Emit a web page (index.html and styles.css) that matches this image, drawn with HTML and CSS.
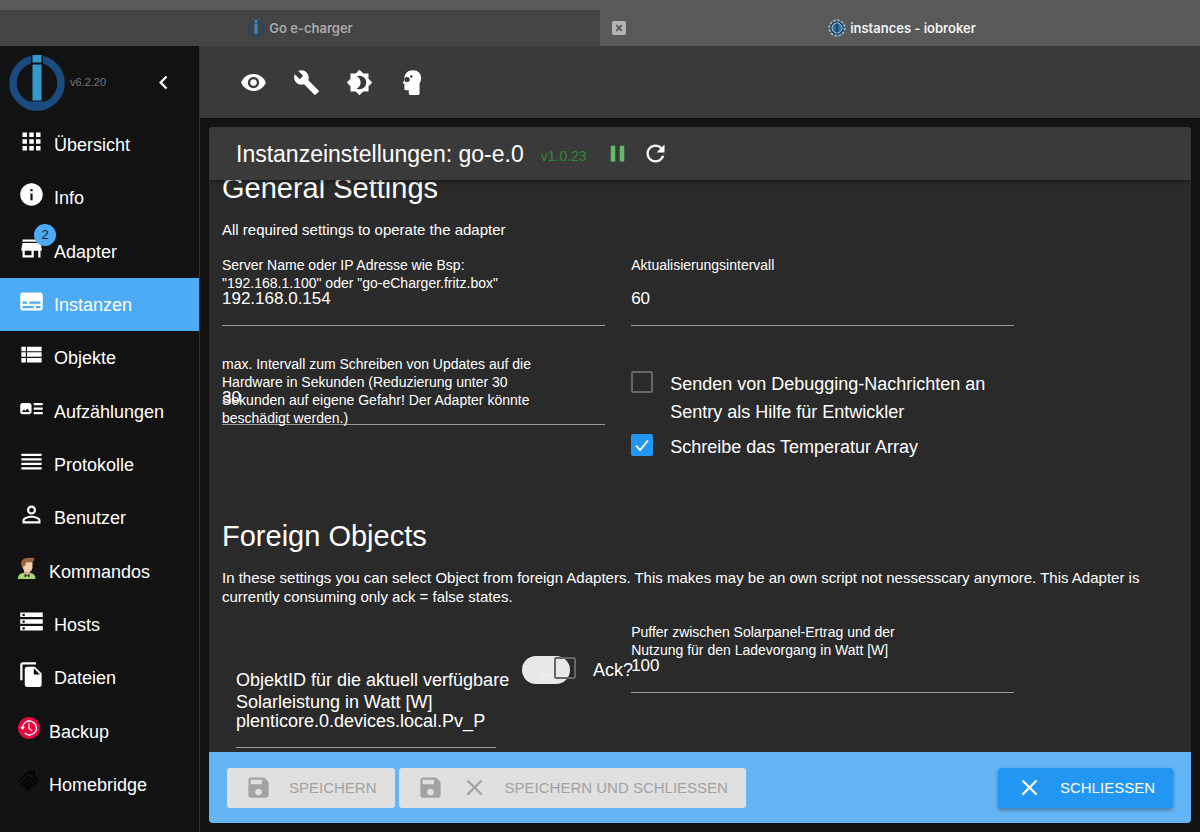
FILE: index.html
```html
<!DOCTYPE html>
<html lang="de">
<head>
<meta charset="utf-8">
<title>instances - iobroker</title>
<link rel="stylesheet" href="styles.css">
</head>
<body>
<div class="tabs">
  <a class="tab" href="#charger">
    <svg class="tab-icon" viewBox="0 0 18 18"><circle cx="9" cy="9.500" r="7.300" fill="none" stroke="#1f4568" stroke-width="2"/><path d="M7.600 1h2.800v2.600H7.600zM7.600 4.500h2.800V15H7.600z" fill="#3d8fb8"/></svg>
    <span>Go e-charger</span>
  </a>
  <div class="tab tab-active">
    <button class="tab-close" aria-label="Tab schließen"><svg viewBox="0 0 14 14"><path d="M4.200 4.200l5.600 5.600M9.800 4.200L4.200 9.800" stroke="#555" stroke-width="1.700"/></svg></button>
    <a class="tab-link" href="#instances">
      <svg class="tab-icon" viewBox="0 0 18 18"><circle cx="9" cy="9" r="7.800" fill="none" stroke="#8fc0e6" stroke-width="1.700" stroke-dasharray="2.400 1.684"/><circle cx="9" cy="9" r="6.600" fill="#1c3d5c"/><circle cx="9" cy="9" r="5" fill="#2f6c9c" stroke="#a3cdea" stroke-width="1"/><path d="M8.200 4.500h1.600v9H8.200z" fill="#173853"/></svg>
      <span>instances - iobroker</span>
    </a>
  </div>
</div>
<div class="app">
  <aside class="sidebar">
    <div class="brand">
      <svg class="logo" viewBox="0 0 56 58"><circle cx="28" cy="30" r="24" fill="none" stroke="#1b4a80" stroke-width="7.500"/><path d="M22 1h12v54H22z" fill="#121212"/><path d="M18 48.500h20v7.500c-6 2.400-14 2.400-20 0z" fill="#1b4a80"/><path d="M23.500 2h9v7.500h-9zM23.500 11.500h9V47.500h-9z" fill="#3399cc"/></svg>
      <span class="version">v6.2.20</span>
      <button class="icon-button collapse" aria-label="Menü einklappen"><svg class="icon" viewBox="0 0 24 24"><path d="M15.410 7.410 14 6l-6 6 6 6 1.410-1.410L10.830 12z"/></svg></button>
    </div>
    <nav class="menu">
      <a class="item" href="#"><span class="glyph"><svg class="icon" viewBox="0 0 24 24"><path d="M4 8h4V4H4v4zm6 12h4v-4h-4v4zm-6 0h4v-4H4v4zm0-6h4v-4H4v4zm6 0h4v-4h-4v4zm6-10v4h4V4h-4zm-6 4h4V4h-4v4zm6 6h4v-4h-4v4zm0 6h4v-4h-4v4z"/></svg></span><span>Übersicht</span></a>
      <a class="item" href="#"><span class="glyph"><svg class="icon" viewBox="0 0 24 24"><path d="M12 2C6.480 2 2 6.480 2 12s4.480 10 10 10 10-4.480 10-10S17.520 2 12 2zm1 15h-2v-6h2v6zm0-8h-2V7h2v2z"/></svg></span><span>Info</span></a>
      <a class="item" href="#"><span class="glyph"><svg class="icon" viewBox="0 0 24 24"><path d="M20 4H4v2h16V4zm1 10v-2l-1-5H4l-1 5v2h1v6h10v-6h4v6h2v-6h1zm-9 4H6v-4h6v4z"/></svg><span class="badge">2</span></span><span>Adapter</span></a>
      <a class="item item-active" href="#"><span class="glyph"><svg class="icon" viewBox="0 0 24 24"><path d="M20 4H4c-1.100 0-2 .9-2 2v12c0 1.100.9 2 2 2h16c1.100 0 2-.9 2-2V6c0-1.100-.9-2-2-2zM4 12h4v2H4v-2zm10 6H4v-2h10v2zm6 0h-4v-2h4v2zm0-4H10v-2h10v2z"/></svg></span><span>Instanzen</span></a>
      <a class="item" href="#"><span class="glyph"><svg class="icon" viewBox="0 0 24 24"><path d="M3 14h4v-4H3v4zm0 5h4v-4H3v4zM3 9h4V5H3v4zm5 5h13v-4H8v4zm0 5h13v-4H8v4zM8 5v4h13V5H8z"/></svg></span><span>Objekte</span></a>
      <a class="item" href="#"><span class="glyph"><svg class="icon" viewBox="0 0 24 24"><path d="M22 13h-8v-2h8v2zm0-6h-8v2h8V7zm-8 10h8v-2h-8v2zm-2-8v6c0 1.100-.9 2-2 2H4c-1.100 0-2-.9-2-2V9c0-1.100.9-2 2-2h6c1.100 0 2 .9 2 2zm-1.500 6l-2.250-3-1.750 2.260-1.250-1.510L3.500 15h7z"/></svg></span><span>Aufzählungen</span></a>
      <a class="item" href="#"><span class="glyph"><svg class="icon" viewBox="0 0 24 24"><path d="M3 15h18v-2H3v2zm0 4h18v-2H3v2zm0-8h18V9H3v2zm0-6v2h18V5H3z"/></svg></span><span>Protokolle</span></a>
      <a class="item" href="#"><span class="glyph"><svg class="icon" viewBox="0 0 24 24"><path d="M12 5.900c1.160 0 2.100.94 2.100 2.100s-.94 2.100-2.100 2.100S9.900 9.160 9.900 8s.94-2.100 2.100-2.100m0 9c2.970 0 6.100 1.460 6.100 2.100v1.100H5.900V17c0-.64 3.130-2.100 6.100-2.100M12 4C9.790 4 8 5.790 8 8s1.790 4 4 4 4-1.790 4-4-1.790-4-4-4zm0 9c-2.670 0-8 1.340-8 4v3h16v-3c0-2.660-5.330-4-8-4z"/></svg></span><span>Benutzer</span></a>
      <a class="item" href="#"><span class="glyph"><svg class="picture" viewBox="0 0 22 22"><path d="M0 22c0-4 2-5.500 5-6l4-1 4 1c3 .5 4.500 2.500 4.500 6z" fill="#a5d86e"/><path d="M6 12h6v4.500l-3 2.500-3-2.500z" fill="#dfa98c"/><path d="M4.500 5h10v5c0 3-2 5-5 5s-5-3-5-6z" fill="#f5cdb5"/><path d="M5 11.500C2.500 8.500 2.500 4 5 2.500 8 .5 13 1 16 .8c.5 2.200-.5 4.200-3 4.400H8L7 9H5.500z" fill="#9c6540"/><path d="M6.500 16.500L9 18.500l2.500-2v4L9 19l-2.500 1.500z" fill="#30343a"/></svg></span><span>Kommandos</span></a>
      <a class="item" href="#"><span class="glyph"><svg class="icon" viewBox="0 0 24 24"><path d="M2 20h20v-4H2v4zm2-3h2v2H4v-2zM2 4v4h20V4H2zm4 3H4V5h2v2zm-4 7h20v-4H2v4zm2-3h2v2H4v-2z"/></svg></span><span>Hosts</span></a>
      <a class="item" href="#"><span class="glyph"><svg class="icon" viewBox="0 0 24 24"><path d="M16 1H4c-1.100 0-2 .9-2 2v14h2V3h12V1zm-1 4l6 6v10c0 1.100-.9 2-2 2H7.990C6.890 23 6 22.100 6 21l.01-14c0-1.100.89-2 1.990-2h7zm-1 7h5.500L14 6.500V12z"/></svg></span><span>Dateien</span></a>
      <a class="item" href="#"><span class="glyph"><svg class="picture" viewBox="0 0 22 22"><circle cx="11" cy="11" r="11" fill="#e4073f"/><path d="M4.500 10.500a7 7 0 1 1 2.200 5.600" fill="none" stroke="#fff" stroke-width="1.400"/><path d="M2.200 9.800h4.700l-2.400 3.200z" fill="#fff"/><path d="M11 6.300V11.500l3.200 2.300" fill="none" stroke="#fff" stroke-width="1.100"/></svg></span><span>Backup</span></a>
      <a class="item" href="#"><span class="glyph"><svg class="picture" viewBox="0 0 22 22"><path d="M1 11L11 1.500l2.500 2.300V2H16v4.500l4 4M3 14.500l8-7.500 7.500 7M6.500 15.500L11 11.500l3.500 3.500-5.500 5.500M7.500 18l3-2.500" fill="none" stroke="#030303" stroke-width="2" stroke-linejoin="round" stroke-linecap="round"/></svg></span><span>Homebridge</span></a>
    </nav>
  </aside>
  <main class="main">
    <div class="toolbar">
      <button class="icon-button tool" aria-label="Ansicht"><svg class="icon" viewBox="0 0 24 24"><path d="M12 4.500C7 4.500 2.730 7.610 1 12c1.730 4.390 6 7.500 11 7.500s9.270-3.110 11-7.500c-1.730-4.390-6-7.500-11-7.500zM12 17c-2.760 0-5-2.240-5-5s2.240-5 5-5 5 2.240 5 5-2.240 5-5 5zm0-8c-1.660 0-3 1.340-3 3s1.340 3 3 3 3-1.340 3-3-1.340-3-3-3z"/></svg></button>
      <button class="icon-button tool" aria-label="Systemeinstellungen"><svg class="icon" viewBox="0 0 24 24"><path d="M22.700 19l-9.100-9.100c.9-2.300.4-5-1.500-6.900-2-2-5-2.400-7.400-1.300L9 6 6 9 1.600 4.700C.4 7.100.9 10.100 2.900 12.100c1.900 1.900 4.600 2.400 6.900 1.500l9.100 9.100c.4.4 1 .4 1.400 0l2.300-2.300c.5-.4.5-1.100.1-1.400z"/></svg></button>
      <button class="icon-button tool" aria-label="Farbschema"><svg class="icon" viewBox="0 0 24 24"><path d="M20 8.690V4h-4.690L12 .69 8.690 4H4v4.690L.69 12 4 15.310V20h4.690L12 23.310 15.310 20H20v-4.690L23.310 12 20 8.690zM12 18c-.89 0-1.740-.2-2.500-.55C11.560 16.500 13 14.420 13 12s-1.440-4.500-3.500-5.450C10.260 6.200 11.110 6 12 6c3.310 0 6 2.690 6 6s-2.690 6-6 6z"/></svg></button>
      <button class="icon-button tool" aria-label="Expertenmodus"><svg class="icon" viewBox="0 0 24 24"><path d="M12.500 1C7.900 1 4.800 4 4.800 8.300v1.400L3.300 12.600l1.500.4v4.500c0 .9.500 1.400 1.400 1.400h2.500V21.600c0 1 .5 1.500 1.400 1.500h6.800c.9 0 1.400-.5 1.400-1.500v-9c1-1.500 1.400-2.800 1.400-4.700C19.700 3.900 16.700 1 12.500 1z"/><circle cx="7.200" cy="9.300" r="2.300" fill="#3a3a3a"/><circle cx="10.900" cy="6.600" r="1.100" fill="#3a3a3a"/></svg></button>
    </div>
    <section class="panel">
      <header class="panel-head">
        <h1>Instanzeinstellungen: go-e.0</h1>
        <span class="adapter-version">v1.0.23</span>
        <button class="icon-button pause" aria-label="Anhalten"><svg class="icon" viewBox="0 0 24 24"><path d="M6 19h4V5H6v14zm8-14v14h4V5h-4z"/></svg></button>
        <button class="icon-button" aria-label="Neu starten"><svg class="icon" viewBox="0 0 24 24"><path d="M17.650 6.350C16.200 4.900 14.210 4 12 4c-4.420 0-7.990 3.580-7.990 8s3.570 8 7.990 8c3.730 0 6.840-2.550 7.730-6h-2.080c-.82 2.330-3.040 4-5.650 4-3.310 0-6-2.690-6-6s2.690-6 6-6c1.660 0 3.140.69 4.220 1.780L13 11h7V4l-2.350 2.350z"/></svg></button>
      </header>
      <div class="scroll">
        <div class="content">
          <h2>General Settings</h2>
          <p>All required settings to operate the adapter</p>
          <div class="form">
            <div class="field"><label for="host">Server Name oder IP Adresse wie Bsp: "192.168.1.100" oder "go-eCharger.fritz.box"</label><input id="host" type="text" value="192.168.0.154"></div>
            <div class="field"><label for="interval">Aktualisierungsintervall</label><input id="interval" type="text" value="60"></div>
            <div class="field"><label for="hardware">max. Intervall zum Schreiben von Updates auf die Hardware in Sekunden (Reduzierung unter 30 Sekunden auf eigene Gefahr! Der Adapter könnte beschädigt werden.)</label><input id="hardware" type="text" value="30"></div>
            <div class="checks">
              <label class="check"><input type="checkbox"><span>Senden von Debugging-Nachrichten an Sentry als Hilfe für Entwickler</span></label>
              <label class="check"><input type="checkbox" checked><span>Schreibe das Temperatur Array</span></label>
            </div>
          </div>
          <h2>Foreign Objects</h2>
          <p>In these settings you can select Object from foreign Adapters. This makes may be an own script not nessesscary anymore. This Adapter is currently consuming only ack = false states.</p>
          <div class="form">
            <div class="object">
              <div class="object-field"><label for="solar">ObjektID für die aktuell verfügbare Solarleistung in Watt [W]</label><input id="solar" type="text" value="plenticore.0.devices.local.Pv_P"></div>
              <button class="browse">...</button>
              <label class="check ack"><input type="checkbox"><span>Ack?</span></label>
            </div>
            <div class="field"><label for="buffer">Puffer zwischen Solarpanel-Ertrag und der Nutzung für den Ladevorgang in Watt [W]</label><input id="buffer" type="text" value="100"></div>
          </div>
        </div>
      </div>
      <footer class="actions">
        <button class="action" disabled><svg class="icon" viewBox="0 0 24 24"><path d="M17 3H5c-1.110 0-2 .9-2 2v14c0 1.100.89 2 2 2h14c1.100 0 2-.9 2-2V7l-4-4zm-5 16c-1.660 0-3-1.340-3-3s1.340-3 3-3 3 1.340 3 3-1.340 3-3 3zm3-10H5V5h10v4z"/></svg><span>SPEICHERN</span></button>
        <button class="action" disabled><svg class="icon" viewBox="0 0 24 24"><path d="M17 3H5c-1.110 0-2 .9-2 2v14c0 1.100.89 2 2 2h14c1.100 0 2-.9 2-2V7l-4-4zm-5 16c-1.660 0-3-1.340-3-3s1.340-3 3-3 3 1.340 3 3-1.340 3-3 3zm3-10H5V5h10v4z"/></svg><svg class="icon" viewBox="0 0 24 24"><path d="M19 6.410L17.590 5 12 10.590 6.410 5 5 6.410 10.590 12 5 17.590 6.410 19 12 13.410 17.590 19 19 17.590 13.410 12z"/></svg><span>SPEICHERN UND SCHLIESSEN</span></button>
        <button class="action action-primary"><svg class="icon" viewBox="0 0 24 24"><path d="M19 6.410L17.590 5 12 10.590 6.410 5 5 6.410 10.590 12 5 17.590 6.410 19 12 13.410 17.590 19 19 17.590 13.410 12z"/></svg><span>SCHLIESSEN</span></button>
      </footer>
    </section>
  </main>
</div>
</body>
</html>
```
FILE: styles.css
```css
* {
  box-sizing: border-box;
}

body {
  margin: 0;
  height: 100vh;
  display: flex;
  flex-direction: column;
  background: #121212;
  color: #fff;
  font-family: "Liberation Sans", Arial, sans-serif;
  font-size: 18px;
}

button,
input {
  font: inherit;
  color: inherit;
}

button {
  padding: 0;
  border: 0;
  background: none;
}

a {
  color: inherit;
  text-decoration: none;
}

svg {
  display: block;
}

.icon {
  width: 27px;
  height: 27px;
  flex: none;
  fill: currentColor;
}

/* Browser tabs */

.tabs {
  flex: none;
  display: grid;
  grid-template-columns: 1fr 1fr;
  padding-top: 10px;
  background: #595959;
  font: 600 13px/16px Inter, sans-serif;
}

.tab {
  display: flex;
  align-items: center;
  justify-content: center;
  gap: 4px;
  height: 36px;
  background: #444;
  color: #a9a9a9;
}

.tab-active {
  justify-content: flex-start;
  padding: 0 12px;
  background: #595959;
  color: #f2f2f2;
}

.tab-link {
  flex: 1;
  display: flex;
  align-items: center;
  justify-content: center;
  gap: 4px;
  padding-right: 14px;
}

.tab-icon {
  width: 18px;
  height: 18px;
}

.tab-close {
  width: 14px;
  height: 14px;
  border-radius: 2px;
  background: #b3b3b3;
}

/* Sidebar */

.app {
  flex: 1;
  min-height: 0;
  display: flex;
}

.sidebar {
  flex: none;
  width: 200px;
  display: flex;
  flex-direction: column;
  padding-bottom: 21px;
  border-right: 1px solid #303030;
}

.brand {
  display: flex;
  align-items: center;
  height: 72px;
  padding: 0 22px 0 9px;
}

.logo {
  width: 56px;
  height: 58px;
}

.version {
  flex: 1;
  padding-left: 5px;
  color: #777;
  font-size: 11px;
}

.menu {
  flex: 1;
  display: grid;
  grid-auto-rows: minmax(40px, 1fr);
}

.item {
  display: flex;
  align-items: center;
  gap: 9px;
  padding: 2px 18px 0;
}

.item-active {
  background: #4dabf5;
}

.glyph {
  position: relative;
  padding-bottom: 8px;
}

.picture {
  width: 22px;
  height: 22px;
}

.badge {
  position: absolute;
  top: -11px;
  right: -11px;
  width: 22px;
  height: 22px;
  border-radius: 50%;
  background: #4dabf5;
  color: #14202c;
  font-size: 13px;
  line-height: 22px;
  text-align: center;
}

/* Main column */

.main {
  flex: 1;
  min-width: 0;
  display: flex;
  flex-direction: column;
}

.toolbar {
  flex: none;
  display: flex;
  align-items: center;
  height: 72px;
  padding-left: 27px;
  background: #3a3a3a;
}

.icon-button {
  display: flex;
  align-items: center;
  justify-content: center;
}

.tool {
  width: 53px;
  height: 53px;
}

.panel {
  flex: 1;
  min-height: 0;
  display: flex;
  flex-direction: column;
  margin: 9px;
  overflow: hidden;
  border-radius: 4px;
  background: #2a2a2a;
}

.panel-head {
  z-index: 1;
  flex: none;
  display: flex;
  align-items: center;
  height: 53px;
  padding-left: 27px;
  background: #3a3a3a;
  box-shadow: 0 2px 4px rgba(0, 0, 0, 0.4);
}

h1 {
  margin: 0;
  font-size: 23px;
  font-weight: 400;
  line-height: 26px;
}

.adapter-version {
  padding: 5px 17px 0;
  color: #2e8b35;
  font-size: 14px;
}

.pause {
  margin-right: 11px;
  color: #66bb6a;
}

.scroll {
  flex: 1;
  min-height: 0;
  overflow: hidden;
}

.content {
  margin-top: -6px;
}

h2 {
  margin: 0 13px 17px;
  font-size: 29px;
  font-weight: 400;
  line-height: 29px;
}

p {
  margin: 0 13px 17px;
  font-size: 15px;
  line-height: 19px;
}

.form {
  display: grid;
  grid-template-columns: minmax(0, 5fr) minmax(0, 5fr) 2fr;
  row-gap: 29px;
  align-items: start;
  margin-bottom: 61px;
}

.form:last-child {
  margin-bottom: 0;
}

.form > :nth-child(2n + 1) {
  grid-column: 1;
}

.form > :nth-child(2n) {
  grid-column: 2;
}

.field {
  position: relative;
  margin: 0 13px;
  padding-top: 32px;
}

.field label {
  position: absolute;
  top: 0;
  left: 0;
  max-width: 318px;
  font-size: 14px;
  line-height: 18px;
}

.field input,
.object-field input {
  display: block;
  width: 100%;
  height: 38px;
  padding: 0 0 15px;
  border: 0;
  border-bottom: 1px solid #9a9a9a;
  background: none;
  font-size: 17px;
}

.checks {
  display: grid;
  gap: 7px;
  padding: 15px 13px 0;
}

.check {
  display: flex;
  gap: 17px;
  line-height: 28px;
}

.check input {
  appearance: none;
  flex: none;
  width: 22px;
  height: 22px;
  margin: 1px 0;
  border: 2px solid #666;
  border-radius: 2px;
}

.check input:checked {
  border: 0;
  background: #2196f3 url("data:image/svg+xml,%3Csvg xmlns='http://www.w3.org/2000/svg' viewBox='0 0 22 22'%3E%3Cpath d='M5 11.5l4 4.500 8-9.500' fill='none' stroke='white' stroke-width='1.800'/%3E%3C/svg%3E");
}

.object {
  display: flex;
  align-items: flex-start;
  padding: 33px 0 0 27px;
}

.object-field {
  position: relative;
  flex: none;
  width: 260px;
  margin: 13px 26px 0 0;
  padding-top: 41px;
}

.object-field label {
  position: absolute;
  top: 0;
  left: 0;
  width: 280px;
  font-size: 18px;
  line-height: 22px;
}

.object-field input {
  font-size: 18px;
}

.browse {
  flex: none;
  width: 48px;
  height: 28px;
  border-radius: 14px;
  background: #e9e9ea;
  color: #fff;
  font-size: 15px;
}

.ack {
  z-index: 1;
  margin-left: -16px;
}

/* Footer */

.actions {
  flex: none;
  display: flex;
  align-items: center;
  gap: 4px;
  height: 71px;
  padding: 0 18px;
  background: #64b5f6;
}

.action {
  display: flex;
  align-items: center;
  gap: 17px;
  height: 40px;
  padding: 0 18px;
  border-radius: 3px;
  background: #e0e0e0;
  color: #a3a3a3;
  font-size: 15px;
}

.action-primary {
  margin-left: auto;
  background: #2196f3;
  color: #fff;
  box-shadow: 0 2px 4px rgba(0, 0, 0, 0.35);
}
```
